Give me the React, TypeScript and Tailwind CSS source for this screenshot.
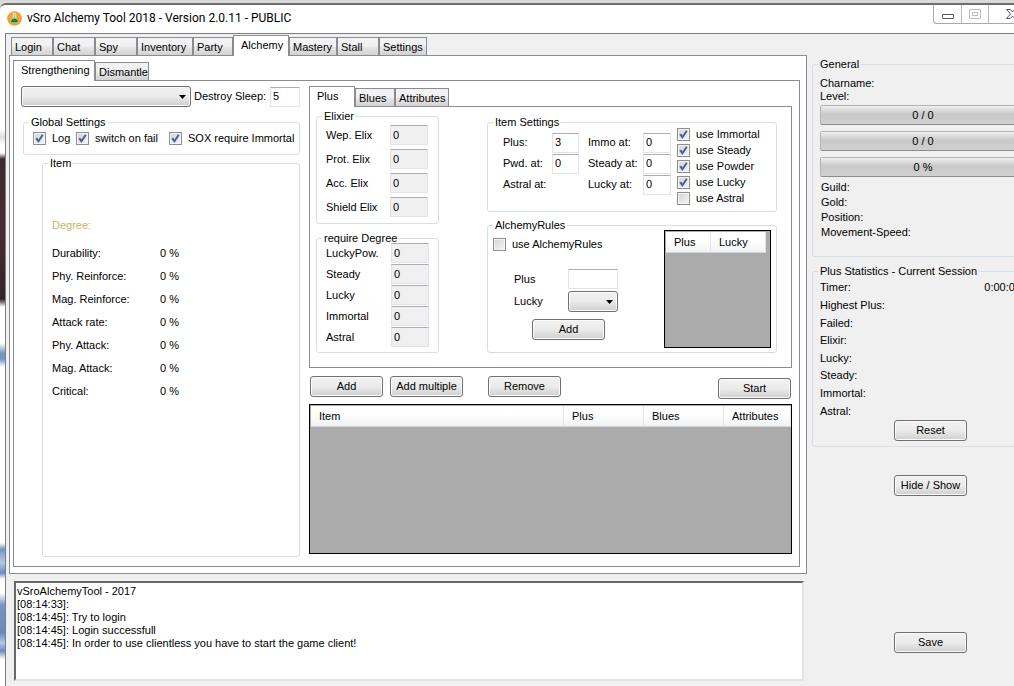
import { useState } from 'react';
import type { ReactNode } from 'react';
import clsx from 'clsx';

type TabItem = { label: string; width: string };

const mainTabs: TabItem[] = [
  { label: 'Login', width: 'w-[42px]' },
  { label: 'Chat', width: 'w-[42px]' },
  { label: 'Spy', width: 'w-[42px]' },
  { label: 'Inventory', width: 'w-[56px]' },
  { label: 'Party', width: 'w-[40px]' },
  { label: 'Alchemy', width: 'w-[56px]' },
  { label: 'Mastery', width: 'w-[48px]' },
  { label: 'Stall', width: 'w-[42px]' },
  { label: 'Settings', width: 'w-[48px]' },
];

const alchemyTabs: TabItem[] = [
  { label: 'Strengthening', width: 'w-[82px]' },
  { label: 'Dismantle', width: 'w-[54px]' },
];

const plusTabs: TabItem[] = [
  { label: 'Plus', width: 'w-[46px]' },
  { label: 'Blues', width: 'w-[40px]' },
  { label: 'Attributes', width: 'w-[54px]' },
];

const itemStats = [
  'Durability:',
  'Phy. Reinforce:',
  'Mag. Reinforce:',
  'Attack rate:',
  'Phy. Attack:',
  'Mag. Attack:',
  'Critical:',
];

const elixirs = ['Wep. Elix', 'Prot. Elix', 'Acc. Elix', 'Shield Elix'];
const degrees = ['LuckyPow.', 'Steady', 'Lucky', 'Immortal', 'Astral'];

const useOptions = [
  { label: 'use Immortal', checked: true },
  { label: 'use Steady', checked: true },
  { label: 'use Powder', checked: true },
  { label: 'use Lucky', checked: true },
  { label: 'use Astral', checked: false },
];

const sessionStats = [
  { label: 'Timer:', value: '0:00:00' },
  { label: 'Highest Plus:', value: '' },
  { label: 'Failed:', value: '' },
  { label: 'Elixir:', value: '' },
  { label: 'Lucky:', value: '' },
  { label: 'Steady:', value: '' },
  { label: 'Immortal:', value: '' },
  { label: 'Astral:', value: '' },
];

const logText = [
  'vSroAlchemyTool - 2017',
  '[08:14:33]:',
  '[08:14:45]: Try to login',
  '[08:14:45]: Login successfull',
  '[08:14:45]: In order to use clientless you have to start the game client!',
].join('\n');

function Tabs({ items, initial }: { items: TabItem[]; initial: string }) {
  const [active, setActive] = useState(initial);

  return (
    <div role="tablist" className="flex items-end h-5">
      {items.map((tab) => {
        const selected = tab.label === active;
        return (
          <button
            key={tab.label}
            type="button"
            role="tab"
            aria-selected={selected}
            onClick={() => setActive(tab.label)}
            className={clsx(
              'shrink-0 border border-b-0 border-[#898c95] text-left whitespace-nowrap',
              tab.width,
              selected
                ? 'relative z-10 h-[21px] -mb-px pl-[7px] pb-px bg-white'
                : 'h-[18px] pl-[3px] pt-px bg-linear-to-b from-[#f2f2f2] from-45% via-[#e6e6e6] via-55% to-[#d2d2d2]',
            )}
          >
            {tab.label}
          </button>
        );
      })}
    </div>
  );
}

function GroupBox({ title, className, children }: { title: string; className?: string; children: ReactNode }) {
  return (
    <fieldset className={clsx('min-w-0 rounded-[3px] border border-[#d5dfe5]', className)}>
      <legend className="ml-[5px] px-0.5 leading-[10px] whitespace-nowrap">{title}</legend>
      {children}
    </fieldset>
  );
}

function Button({ children, className }: { children: ReactNode; className?: string }) {
  return (
    <button
      type="button"
      className={clsx(
        'w-[73px] h-[21px] shrink-0 rounded-[3px] border border-[#707070] text-center whitespace-nowrap',
        'bg-linear-to-b from-[#f2f2f2] from-0% via-[#ebebeb] via-50% to-[#cfcfcf] shadow-[inset_0_0_0_1px_#fafafa]',
        className,
      )}
    >
      {children}
    </button>
  );
}

function TextBox({ label, value, className, disabled }: { label: string; value?: string; className?: string; disabled?: boolean }) {
  return (
    <input
      type="text"
      aria-label={label}
      defaultValue={value}
      readOnly={disabled}
      className={clsx(
        'h-5 shrink-0 border border-[#e2e3ea] border-t-[#abadb3] px-[2px] pb-px outline-none',
        disabled ? 'bg-[#f0f0f0]' : 'bg-white',
        className,
      )}
    />
  );
}

function CheckBox({ label, checked }: { label: string; checked?: boolean }) {
  return (
    <label className="flex items-center gap-1.5 whitespace-nowrap">
      <span className="grid size-[13px] shrink-0">
        <input
          type="checkbox"
          defaultChecked={checked}
          className="peer [grid-area:1/1] size-[13px] appearance-none border border-[#8e8f8f] bg-linear-to-br from-[#cfd3d8] to-[#f6f6f6] shadow-[inset_0_0_0_1px_#f4f4f4]"
        />
        <svg
          viewBox="0 0 13 13"
          className="[grid-area:1/1] size-[13px] pointer-events-none invisible peer-checked:visible"
          fill="none"
          stroke="#4b5f9c"
          strokeWidth="2"
        >
          <path d="M3.2 6.2 L5.4 9.2 L9.8 2.8" />
        </svg>
      </span>
      {label}
    </label>
  );
}

function DropDown({ label, className }: { label: string; className?: string }) {
  return (
    <span className={clsx('grid h-[21px] shrink-0', className)}>
      <select
        aria-label={label}
        className="[grid-area:1/1] w-full h-[21px] appearance-none rounded-[3px] border border-[#707070] bg-linear-to-b from-[#f2f2f2] from-0% via-[#ebebeb] via-50% to-[#cfcfcf] shadow-[inset_0_0_0_1px_#fafafa]"
      >
        <option value=""></option>
      </select>
      <svg viewBox="0 0 7 4" className="[grid-area:1/1] w-[7px] h-1 mr-[5px] self-center justify-self-end pointer-events-none">
        <path d="M0 0h7L3.5 4z" fill="#000" />
      </svg>
    </span>
  );
}

function Meter({ text }: { text: string }) {
  return (
    <div
      role="progressbar"
      aria-label={text}
      aria-valuenow={0}
      className="w-[206px] h-5 rounded-[2px] border border-[#b2b2b2] border-b-[#8c8c8c] text-center leading-[18px] bg-linear-to-b from-[#f0f0f0] from-0% via-[#c9c9c9] via-45% to-[#d0d0d0]"
    >
      {text}
    </div>
  );
}

function HeaderCell({ children, className }: { children: ReactNode; className?: string }) {
  return (
    <th
      scope="col"
      className={clsx('h-[21px] p-0 pl-2 text-left font-normal border-r border-b border-r-[#e3e4e6] border-b-[#d5d5d5] bg-linear-to-b from-white from-40% to-[#f1f2f4]', className)}
    >
      {children}
    </th>
  );
}

function TitleBar() {
  return (
    <header className="pt-[3px] bg-[#dadada]">
      <div className="flex h-[30px] items-start justify-between rounded-tl-md border-t-2 border-[#6e6e6e] bg-white">
        <div className="flex items-center gap-[5px] h-[27px] pl-[7px]">
          <svg viewBox="0 0 15 15" className="size-[15px]">
            <circle cx="7.5" cy="7.5" r="7.3" fill="#f6a12c" />
            <path d="M5.8 2.2h3.4v4.2l3 5.6H2.8l3-5.6z" fill="#e9f4e4" />
            <path d="M5.6 7.4h3.8l2.3 4.2H3.3z" fill="#12843c" />
            <path d="M6.6 3h1.8v4.4H6.6z" fill="#9fc9a4" />
          </svg>
          <h1 className="font-[Roboto,'Open_Sans',sans-serif] text-[12px] whitespace-nowrap">
            vSro Alchemy Tool 2018 - Version 2.0.11 - PUBLIC
          </h1>
        </div>
        <div className="flex h-[19px] w-[81px] overflow-hidden rounded-bl-[4px] border-l border-b border-[#a9a9a9]">
          <button type="button" aria-label="Minimize" className="w-[28px] shrink-0 border-r border-[#b9b9b9] flex items-center justify-center">
            <svg viewBox="0 0 12 5" className="w-3 h-[5px] mt-[5px]">
              <rect x="0.5" y="0.5" width="11" height="4" rx="0.5" fill="#fff" stroke="#53566b" />
            </svg>
          </button>
          <button type="button" aria-label="Maximize" className="w-[27px] shrink-0 border-r border-[#b9b9b9] flex items-center justify-center">
            <svg viewBox="0 0 12 10" className="w-3 h-2.5" fill="none" stroke="#bdbdc0">
              <rect x="0.5" y="0.5" width="11" height="9" rx="0.5" />
              <rect x="3.5" y="3.5" width="5" height="3" />
            </svg>
          </button>
          <button type="button" aria-label="Close" className="w-[47px] shrink-0 flex items-center pl-[17px]">
            <svg viewBox="0 0 13 10" className="w-[13px] h-2.5" fill="#fff" stroke="#53566b">
              <path d="M0.6 0.5h3.6l2.3 2.4 2.3-2.4h3.6L8.6 5l3.8 4.5H8.8L6.5 7.1 4.2 9.5H0.6L4.4 5z" />
            </svg>
          </button>
        </div>
      </div>
    </header>
  );
}

function StrengthPanel() {
  return (
    <div className="w-[279px] shrink-0 flex flex-col">
      <div className="flex items-center">
        <DropDown label="Item slot" className="w-[170px]" />
        <label htmlFor="destroy-sleep" className="flex-1 pl-[3px] whitespace-nowrap">Destroy Sleep:</label>
        <input id="destroy-sleep" defaultValue="5" className="w-[30px] h-5 border border-[#e2e3ea] border-t-[#abadb3] bg-white px-[2px] pb-px outline-none" />
      </div>

      <GroupBox title="Global Settings" className="mt-[10px] ml-[2px] h-[38px]">
        <div className="flex items-center pl-[9px] pt-[5px]">
          <div className="w-[43px]"><CheckBox label="Log" checked /></div>
          <div className="w-[93px]"><CheckBox label="switch on fail" checked /></div>
          <CheckBox label="SOX require Immortal" checked />
        </div>
      </GroupBox>

      <GroupBox title="Item" className="mt-[3px] ml-[21px] flex-1">
        <p className="pt-[51px] pl-[9px] text-[#c3b664]">Degree:</p>
        <dl className="grid grid-cols-[108px_auto] auto-rows-[23px] items-center pl-[9px] pt-2.5">
          {itemStats.map((stat) => (
            <div key={stat} className="contents">
              <dt>{stat}</dt>
              <dd>0 %</dd>
            </div>
          ))}
        </dl>
      </GroupBox>
    </div>
  );
}

function PlusPage() {
  return (
    <div className="flex min-h-[262px] justify-between border border-[#898c95] bg-white pl-[6px] pr-[14px] pt-1">
      <div className="w-[123px] shrink-0">
        <GroupBox title="Elixier" className="h-[113px]">
          <div className="flex flex-col gap-1 pt-1 pl-[9px] pr-[10px]">
            {elixirs.map((name) => (
              <div key={name} className="flex items-center justify-between">
                <span>{name}</span>
                <TextBox label={name} value="0" disabled className="w-[38px]" />
              </div>
            ))}
          </div>
        </GroupBox>
        <GroupBox title="require Degree" className="mt-[9px] h-[120px]">
          <div className="flex flex-col gap-px pl-[9px] pr-[9px]">
            {degrees.map((name) => (
              <div key={name} className="flex items-center justify-between">
                <span>{name}</span>
                <TextBox label={name} value="0" disabled className="w-[38px]" />
              </div>
            ))}
          </div>
        </GroupBox>
      </div>

      <div className="w-[290px] shrink-0 pt-[6px]">
        <GroupBox title="Item Settings" className="h-[95px]">
          <div className="flex pt-[5px] pl-[15px]">
            <div className="grid grid-cols-[49px_36px_55px_34px] auto-rows-[21px] items-center">
              <span>Plus:</span>
              <TextBox label="Plus" value="3" className="w-[27px]" />
              <span>Immo at:</span>
              <TextBox label="Immo at" value="0" className="w-[28px]" />
              <span>Pwd. at:</span>
              <TextBox label="Pwd. at" value="0" className="w-[27px]" />
              <span>Steady at:</span>
              <TextBox label="Steady at" value="0" className="w-[28px]" />
              <span className="col-span-2">Astral at:</span>
              <span>Lucky at:</span>
              <TextBox label="Lucky at" value="0" className="w-[28px]" />
            </div>
            <div className="flex flex-col gap-[3px] -mt-1">
              {useOptions.map((option) => (
                <CheckBox key={option.label} label={option.label} checked={option.checked} />
              ))}
            </div>
          </div>
        </GroupBox>

        <GroupBox title="AlchemyRules" className="mt-[8px] h-[133px]">
          <div className="flex justify-between pl-[5px] pr-[5px]">
            <div className="pt-[8px]">
              <CheckBox label="use AlchemyRules" />
              <div className="grid grid-cols-[54px_50px] gap-y-[2px] items-center pt-[18px] pl-[21px]">
                <span>Plus</span>
                <TextBox label="Rule plus" className="w-[50px]" />
                <span>Lucky</span>
                <DropDown label="Rule lucky" className="w-[50px]" />
              </div>
              <Button className="mt-[7px] ml-[39px]">Add</Button>
            </div>
            <div className="w-[107px] h-[118px] border border-black bg-[#ababab] pl-px pt-px pr-[4px]">
              <table className="w-full border-separate border-spacing-0">
                <thead>
                  <tr>
                    <HeaderCell className="w-[45px]">Plus</HeaderCell>
                    <HeaderCell>Lucky</HeaderCell>
                  </tr>
                </thead>
              </table>
            </div>
          </div>
        </GroupBox>
      </div>
    </div>
  );
}

function SidePanel() {
  return (
    <aside className="w-[237px] -mr-[35px] shrink-0 flex flex-col pt-[25px]">
      <GroupBox title="General" className="h-[198px]">
        <div className="pl-[7px] leading-[13px]">
          <p className="pt-2">Charname:</p>
          <p>Level:</p>
          <div className="flex flex-col gap-1.5 pt-[2px]">
            <Meter text="0 / 0" />
            <Meter text="0 / 0" />
            <Meter text="0 %" />
          </div>
          <div className="pt-[3px] pl-px leading-[15px]">
            <p>Guild:</p>
            <p>Gold:</p>
            <p>Position:</p>
            <p>Movement-Speed:</p>
          </div>
        </div>
      </GroupBox>

      <GroupBox title="Plus Statistics - Current Session" className="mt-[9px] h-[181px]">
        <dl className="grid h-36 auto-rows-fr items-center pt-[3px] pl-[7px] pr-[27px]">
          {sessionStats.map((stat) => (
            <div key={stat.label} className="flex justify-between">
              <dt>{stat.label}</dt>
              <dd>{stat.value}</dd>
            </div>
          ))}
        </dl>
        <Button className="mx-auto block">Reset</Button>
      </GroupBox>

      <Button className="mx-auto mt-7">Hide / Show</Button>
      <Button className="mx-auto mt-auto mb-[33px]">Save</Button>
    </aside>
  );
}

export default function App() {
  return (
    <div className="min-h-screen flex flex-col overflow-hidden bg-white font-['Liberation_Sans',Arial,sans-serif] text-[11px] leading-[13px] text-black">
      <TitleBar />

      <div className="flex flex-1">
        {/* Blurred desktop behind the glass frame */}
        <div className="w-[5px] shrink-0 bg-[linear-gradient(#fff_0_96px,#ddd_104px,#fff_112px_120px,#3a2c2c_126px,#4a2a32_200px,#2e2726_266px,#fff_274px_310px,#7795c2_320px,#7795c2_326px,#fff_334px_510px,#7795c2_516px,#b4c8e6_530px,#6a8abb_540px,#fff_546px_560px,#7795c2_572px,#6a8abb_600px,#b4c8e6_610px,#6a8abb_618px,#fff_626px)]" />

        <main className="flex flex-1 min-w-0 border-l border-t border-[#7d7d7d] bg-[#f0f0f0]">
          <div className="flex-1 min-w-0 flex flex-col pl-[3px] pt-px mr-[5px]">
            <div className="pl-[2px]">
              <Tabs items={mainTabs} initial="Alchemy" />
            </div>
            <div className="border border-[#898c95] bg-white pl-[3px] pr-[6px] pt-1 pb-1.5">
              <Tabs items={alchemyTabs} initial="Strengthening" />
              <div className="flex gap-[9px] border border-[#898c95] bg-white pl-[7px] pr-[7px] pt-[5px] pb-[9px]">
                <StrengthPanel />

                <div className="flex-1 min-w-0 pb-[3px]">
                  <Tabs items={plusTabs} initial="Plus" />
                  <PlusPage />

                  <div className="flex items-start pt-2 pl-px pr-px">
                    <Button>Add</Button>
                    <Button className="ml-[7px]">Add multiple</Button>
                    <Button className="ml-[25px]">Remove</Button>
                    <Button className="ml-auto mt-[2px]">Start</Button>
                  </div>

                  <div className="mt-[5px] h-[150px] border border-black bg-[#ababab] pt-px pl-px">
                    <table className="w-full border-separate border-spacing-0">
                      <thead>
                        <tr>
                          <HeaderCell>Item</HeaderCell>
                          <HeaderCell className="w-[80px]">Plus</HeaderCell>
                          <HeaderCell className="w-[80px]">Blues</HeaderCell>
                          <HeaderCell className="w-[67px]">Attributes</HeaderCell>
                        </tr>
                      </thead>
                    </table>
                  </div>
                </div>
              </div>
            </div>

            <textarea
              aria-label="Log"
              readOnly
              defaultValue={logText}
              className="block flex-1 min-h-[98px] mt-[7px] mb-[5px] ml-[5px] mr-[3px] resize-none border-2 border-[#e3e3e3] border-t-[#696969] border-l-[#696969] bg-white pl-px pt-[2px] outline-none"
            />
          </div>

          <SidePanel />
        </main>
      </div>
    </div>
  );
}
